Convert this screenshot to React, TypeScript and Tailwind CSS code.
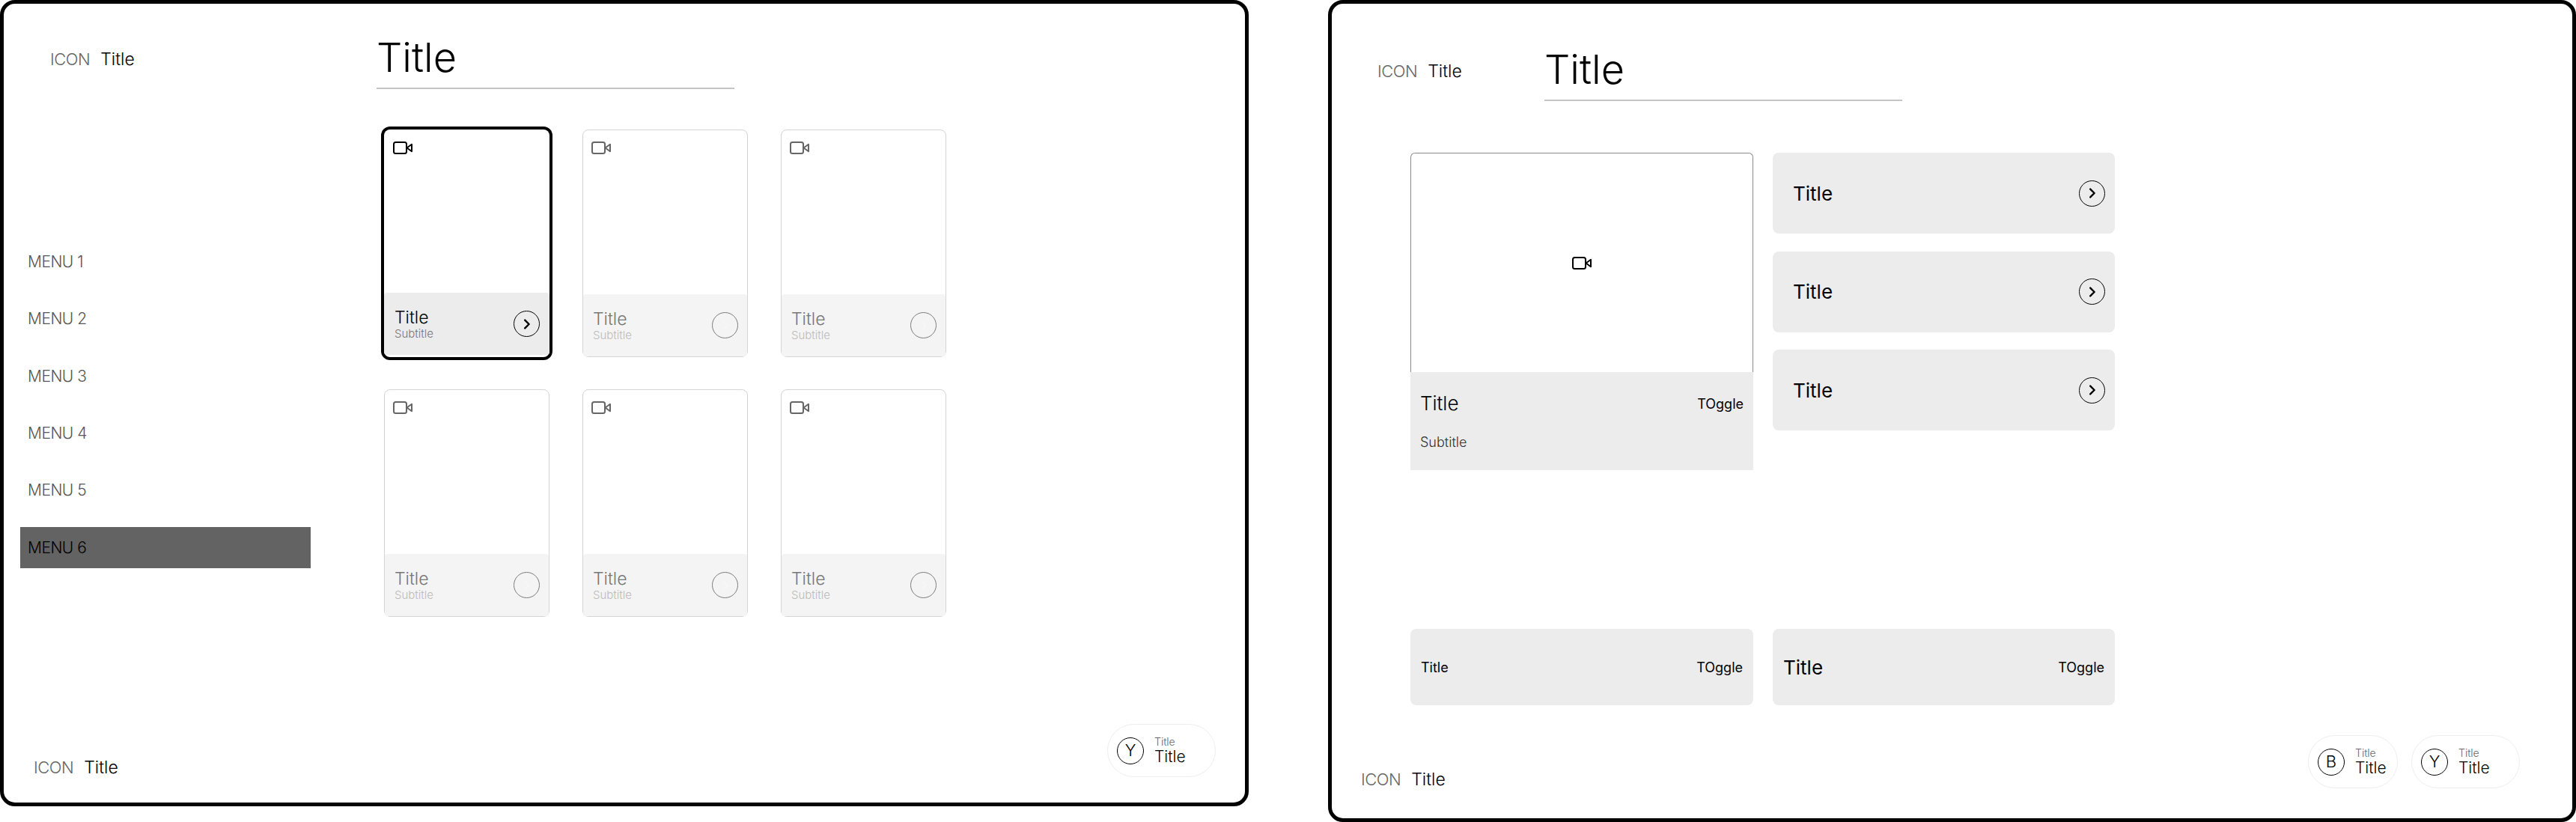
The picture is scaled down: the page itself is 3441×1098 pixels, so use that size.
const VideoIcon = ({ className = "" }: { className?: string }) => (
  <svg width="26" height="17" viewBox="0 0 26 17" fill="none" stroke="currentColor" strokeWidth="2" strokeLinejoin="round" className={className}>
    <rect x="1" y="1" width="17" height="15" rx="2.5" />
    <path d="M18.5 8.5 L25 3.8 V13.2 Z" />
  </svg>
);

const Arrow = ({ faded = false }: { faded?: boolean }) => (
  <div className={`flex h-[35px] w-[35px] shrink-0 items-center justify-center rounded-full border ${faded ? "border-[#7c7c7c]" : "border-black"}`}>
    <svg width="10" height="14" viewBox="0 0 10 14" fill="none" stroke={faded ? "#f8f8f8" : "#000"} strokeWidth={faded ? "1.2" : "2.4"} strokeLinecap="round" strokeLinejoin="round">
      <path d="M2.2 1.6 L7.6 7 L2.2 12.4" />
    </svg>
  </div>
);

const Brand = ({ className = "" }: { className?: string }) => (
  <div className={`flex h-[30px] items-center gap-[14px] font-light ${className}`}>
    <span className="text-[22px] tracking-[-0.5px] text-[#666]">ICON</span>
    <span className="text-[23px] text-black">Title</span>
  </div>
);

const PageTitle = () => (
  <div className="h-[72px] w-[478px] border-b-2 border-[#c4c4c4]">
    <div className="h-[70px] text-[54px] leading-[60px] font-light text-black">Title</div>
  </div>
);

const Card = ({ selected = false }: { selected?: boolean }) => (
  <div className={`flex h-[304px] w-[221px] flex-col rounded-[8px] bg-white ${selected ? "shadow-[0_0_0_4px_#000]" : "border border-[#d4d4d4]"}`}>
    <VideoIcon className={selected ? "mt-[16px] ml-[12px] text-black" : "mt-[15px] ml-[11px] text-[#666]"} />
    <div className={`mt-auto flex h-[83px] items-center justify-between rounded-[4px] ${selected ? "mb-[3px] bg-[#ececec] pr-[13px] pl-[14px]" : "bg-[#f4f4f4] pr-[12px] pl-[13px]"}`}>
      <div className="flex flex-col">
        <span className={`text-[23px] leading-[26px] font-light ${selected ? "text-black" : "text-[#777]"}`}>Title</span>
        <span className={`text-[15px] leading-[18px] font-light ${selected ? "text-[#777]" : "text-[#bbb]"}`}>Subtitle</span>
      </div>
      <Arrow faded={!selected} />
    </div>
  </div>
);

const Pill = ({ letter, className = "" }: { letter: string; className?: string }) => (
  <div className={`flex h-[71px] items-center rounded-full border border-[#eeeeee] pl-[12px] ${className}`}>
    <div className="flex h-[36px] w-[36px] items-center justify-center rounded-full border border-black text-[22px] font-light text-black">{letter}</div>
    <div className="ml-[14px] flex flex-col">
      <span className="text-[14px] leading-[17px] font-light text-[#666]">Title</span>
      <span className="text-[21px] leading-[24px] font-light text-black">Title</span>
    </div>
  </div>
);

const ListCard = () => (
  <div className="flex h-[108px] items-center justify-between rounded-[8px] bg-[#ececec] pr-[13px] pl-[27px]">
    <span className="text-[26px] font-normal text-black">Title</span>
    <Arrow />
  </div>
);

const Toggle = () => <span className="text-[18px] text-black">TOggle</span>;

const menus = ["MENU 1", "MENU 2", "MENU 3", "MENU 4", "MENU 5", "MENU 6"];

export default function App() {
  return (
    <div className="flex h-[1098px] w-[3441px] items-start gap-[106px] overflow-hidden bg-white font-['Inter','Liberation_Sans',sans-serif]">
      <div className="box-border flex h-[1077px] w-[1668px] shrink-0 rounded-[20px] border-[5px] border-black">
        <aside className="flex w-[498px] shrink-0 flex-col">
          <Brand className="mt-[59px] ml-[62px]" />
          <nav className="mt-[228px] ml-[22px] flex w-[388px] flex-col gap-[21.4px]">
            {menus.map((m, i) => (
              <div key={m} className={`flex h-[55px] items-center pl-[10px] text-[21px] font-light tracking-[-0.5px] ${i === 5 ? "bg-[#636363] text-black" : "text-[#555]"}`}>{m}</div>
            ))}
          </nav>
          <Brand className="mt-auto mb-[32px] ml-[40px]" />
        </aside>
        <main className="flex flex-1 flex-col">
          <div className="mt-[42px]"><PageTitle /></div>
          <div className="mt-[54px] ml-[10px] grid w-fit grid-cols-[221px_221px_221px] gap-x-[44px] gap-y-[43px]">
            <Card selected />
            <Card />
            <Card />
            <Card />
            <Card />
            <Card />
          </div>
          <Pill letter="Y" className="mt-auto mr-[39px] mb-[34px] w-[145px] self-end" />
        </main>
      </div>

      <div className="box-border flex h-[1098px] w-[1667px] shrink-0 flex-col rounded-[20px] border-[5px] border-black">
        <header className="flex items-start">
          <Brand className="mt-[75px] ml-[61px] w-[223px]" />
          <div className="mt-[58px]"><PageTitle /></div>
        </header>
        <section className="mt-[69px] ml-[105px] grid w-fit grid-cols-[458px_457px] gap-x-[26px]">
          <div className="flex flex-col">
            <div className="flex h-[293px] items-center justify-center rounded-t-[6px] border border-b-0 border-[#8a8a8a] bg-white">
              <VideoIcon className="text-black" />
            </div>
            <div className="flex h-[131px] flex-col bg-[#ececec] px-[13px]">
              <div className="mt-[27px] flex items-center justify-between">
                <span className="text-[26px] leading-[30px] font-light text-black">Title</span>
                <Toggle />
              </div>
              <span className="mt-[26px] text-[18px] leading-[22px] font-light text-[#333]">Subtitle</span>
            </div>
          </div>
          <div className="flex flex-col gap-[23.5px]">
            <ListCard />
            <ListCard />
            <ListCard />
          </div>
        </section>
        <section className="mt-[212px] ml-[105px] grid w-fit grid-cols-[458px_457px] gap-x-[26px]">
          <div className="flex h-[102px] items-center justify-between rounded-[8px] bg-[#ececec] px-[14px]">
            <span className="text-[18px] text-black">Title</span>
            <Toggle />
          </div>
          <div className="flex h-[102px] items-center justify-between rounded-[8px] bg-[#ececec] px-[14px]">
            <span className="text-[26px] font-normal text-black">Title</span>
            <Toggle />
          </div>
        </section>
        <footer className="mt-auto flex items-end justify-between">
          <Brand className="mb-[37px] ml-[39px]" />
          <div className="mr-[70px] mb-[40px] flex gap-[18px]">
            <Pill letter="B" className="w-[120px]" />
            <Pill letter="Y" className="w-[145px]" />
          </div>
        </footer>
      </div>
    </div>
  );
}
